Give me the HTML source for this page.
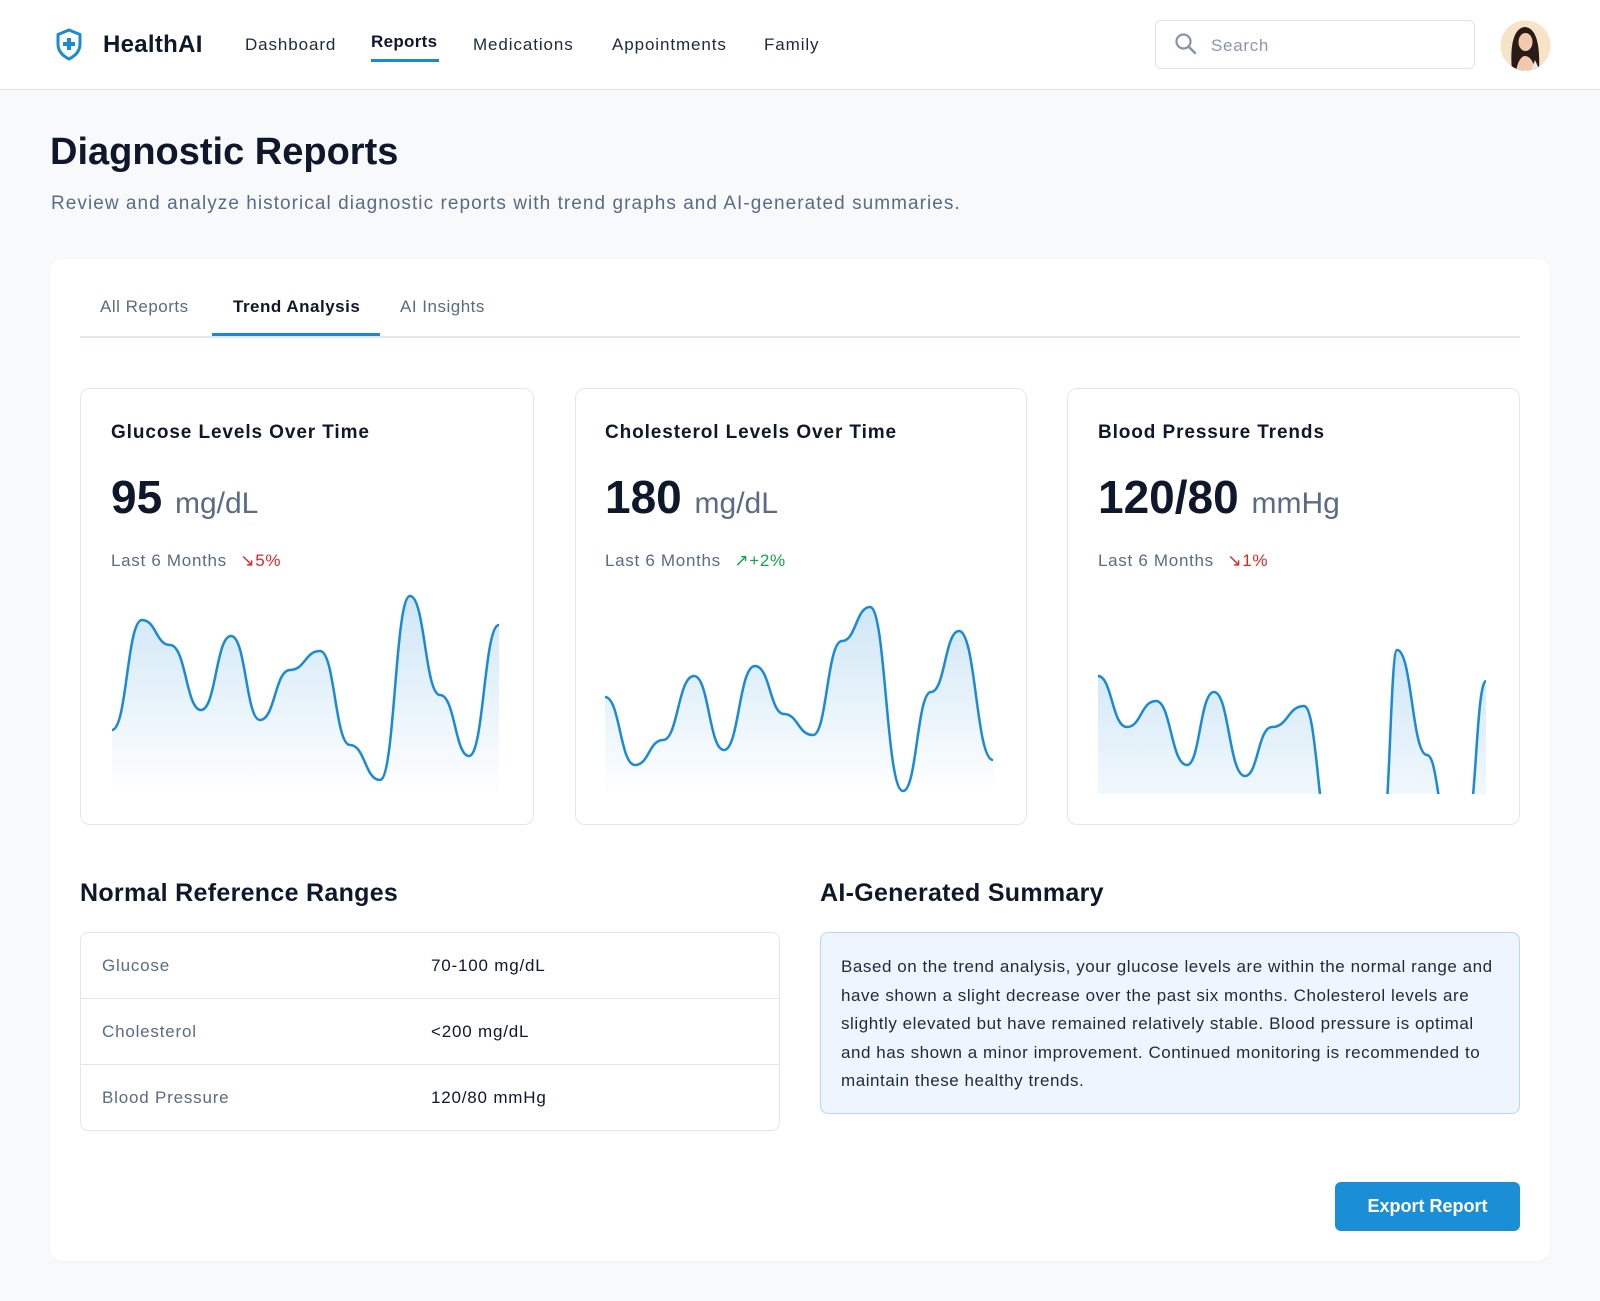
<!DOCTYPE html>
<html><head><meta charset="utf-8"><style>
*{margin:0;padding:0;box-sizing:border-box}
body{width:1600px;height:1301px;background:#f8f9fb;font-family:"Liberation Sans",sans-serif;color:#0f172a;position:relative;overflow:hidden}
.a{position:absolute;white-space:nowrap}
header{position:absolute;left:0;top:0;width:1600px;height:90px;background:#fff;border-bottom:1px solid #e2e6ec}
.nav{font-size:17px;color:#1e293b;top:35px;letter-spacing:0.9px}
.panel{position:absolute;left:50px;top:259px;width:1500px;height:1002px;background:#fff;border-radius:12px;box-shadow:0 1px 3px rgba(0,0,0,.04)}
.card{position:absolute;top:388px;height:437px;border:1.5px solid #e3e7ec;border-radius:10px;background:#fff}
.ct{font-size:19px;font-weight:bold;color:#0f172a;letter-spacing:0.9px}
.cv{font-size:46px;font-weight:bold;color:#0f172a}
.cv span{font-size:30px;font-weight:normal;color:#5a6b85}
.cl{font-size:17px;color:#5a6b85;letter-spacing:0.7px}
.h2{font-size:25px;font-weight:bold;top:879px;letter-spacing:0.3px}
.tbl{position:absolute;left:80px;top:932px;width:700px;height:199px;border:1.5px solid #e3e7ec;border-radius:8px}
.row{position:absolute;left:0;width:100%;height:66px;border-bottom:1.5px solid #e3e7ec;font-size:17px;letter-spacing:0.8px}
.row .l{position:absolute;left:21px;top:23px;color:#5a6b85}
.row .v{position:absolute;left:350px;top:23px;color:#0f172a}
.tab{font-size:17px;top:297px;letter-spacing:0.5px}
</style></head><body>
<header></header>
<svg class="a" style="left:55px;top:28px" width="28" height="33" viewBox="0 0 28 33"><path d="M14 2 L25 6.5 V16 C25 23 20 28 14 31 C8 28 3 23 3 16 V6.5 Z" fill="none" stroke="#1a8ad4" stroke-width="3" stroke-linejoin="round"/><path d="M14 10 V22 M8 16 H20" stroke="#1a8ad4" stroke-width="4"/></svg>
<div class="a" style="left:103px;top:31px;font-size:24px;font-weight:bold;color:#0f172a;letter-spacing:0.3px">HealthAI</div>
<div class="a nav" style="left:245px">Dashboard</div>
<div class="a nav" style="left:371px;top:32px;font-weight:bold;color:#0f172a;letter-spacing:0.3px">Reports</div>
<div class="a" style="left:371px;top:59px;width:68px;height:3px;background:#1a8ad4"></div>
<div class="a nav" style="left:473px">Medications</div>
<div class="a nav" style="left:612px">Appointments</div>
<div class="a nav" style="left:764px">Family</div>
<div class="a" style="left:1155px;top:20px;width:320px;height:49px;border:1.5px solid #dfe3e9;border-radius:6px;background:#fff"></div>
<svg class="a" style="left:1174px;top:32px" width="24" height="24" viewBox="0 0 24 24"><circle cx="9.5" cy="9.5" r="7" fill="none" stroke="#8894a8" stroke-width="2.2"/><path d="M14.5 14.5 L21 21" stroke="#8894a8" stroke-width="2.6" stroke-linecap="round"/></svg>
<div class="a" style="left:1211px;top:36px;font-size:17px;color:#8b97aa;letter-spacing:0.7px">Search</div>
<svg class="a" style="left:1500px;top:20px" width="51" height="51" viewBox="0 0 51 51"><defs><clipPath id="av"><circle cx="25.5" cy="25.5" r="25"/></clipPath></defs><circle cx="25.5" cy="25.5" r="25" fill="#f6e3c8"/><g clip-path="url(#av)"><path d="M12 51 C10 30 12 8 25 7 C38 8 40 30 39 51 Z" fill="#2b1b16"/><ellipse cx="25.5" cy="22" rx="7" ry="9" fill="#f1c9ad"/><path d="M16 51 C18 40 22 36 25 36 C30 36 34 42 35 51 Z" fill="#f1c9ad"/><path d="M31 51 L35 40 L40 51 Z" fill="#e8e8e8"/></g></svg>
<div class="a" style="left:50px;top:131px;font-size:38px;font-weight:bold;color:#0f172a">Diagnostic Reports</div>
<div class="a" style="left:51px;top:193px;font-size:19px;color:#5a6b85;letter-spacing:1.05px">Review and analyze historical diagnostic reports with trend graphs and AI-generated summaries.</div>
<div class="panel"></div>
<div class="a" style="left:80px;top:336px;width:1440px;height:1.5px;background:#e3e7ec"></div>
<div class="a tab" style="left:100px;color:#5a6b85">All Reports</div>
<div class="a tab" style="left:233px;font-weight:bold;color:#0f172a">Trend Analysis</div>
<div class="a tab" style="left:400px;color:#5a6b85">AI Insights</div>
<div class="a" style="left:212px;top:333px;width:168px;height:3px;background:#1a8ad4"></div>

<div class="card" style="left:80px;width:454px"></div>
<div class="card" style="left:575px;width:452px"></div>
<div class="card" style="left:1067px;width:453px"></div>

<div class="a ct" style="left:111px;top:422px">Glucose Levels Over Time</div>
<div class="a cv" style="left:111px;top:470px">95 <span>mg/dL</span></div>
<div class="a cl" style="left:111px;top:551px">Last 6 Months <span style="color:#dc2626;margin-left:8px">↘5%</span></div>

<div class="a ct" style="left:605px;top:422px">Cholesterol Levels Over Time</div>
<div class="a cv" style="left:605px;top:470px">180 <span>mg/dL</span></div>
<div class="a cl" style="left:605px;top:551px">Last 6 Months <span style="color:#16a34a;margin-left:8px">↗+2%</span></div>

<div class="a ct" style="left:1098px;top:422px">Blood Pressure Trends</div>
<div class="a cv" style="left:1098px;top:470px">120/80 <span>mmHg</span></div>
<div class="a cl" style="left:1098px;top:551px">Last 6 Months <span style="color:#dc2626;margin-left:8px">↘1%</span></div>

<svg class="a" style="left:0;top:0" width="1600" height="1301" viewBox="0 0 1600 1301">
<defs><linearGradient id="g" x1="0" y1="0" x2="0" y2="1"><stop offset="0" stop-color="#cfe6f6"/><stop offset="1" stop-color="#ffffff"/></linearGradient>
<clipPath id="c3"><rect x="1098" y="600" width="390" height="194"/></clipPath></defs>
<path d="M112 730 C127 730 127 620 142 620 C156 620 156 645 170 645 C186 645 186 710 201 710 C216 710 216 636 231 636 C246 636 246 720 260 720 C275 720 275 670 290 670 C305 670 305 651 320 651 C335 651 335 745 350 745 C365 745 365 780 380 780 C395 780 395 596 410 596 C425 596 425 695 440 695 C455 695 455 756 469 756 C484 756 484 625 499 625 L499 796 L112 796 Z" fill="url(#g)"/>
<path d="M112 730 C127 730 127 620 142 620 C156 620 156 645 170 645 C186 645 186 710 201 710 C216 710 216 636 231 636 C246 636 246 720 260 720 C275 720 275 670 290 670 C305 670 305 651 320 651 C335 651 335 745 350 745 C365 745 365 780 380 780 C395 780 395 596 410 596 C425 596 425 695 440 695 C455 695 455 756 469 756 C484 756 484 625 499 625" fill="none" stroke="#1a8ad4" stroke-width="2.5"/>
<path d="M605 697 C620 697 620 765 635 765 C649 765 649 740 663 740 C678 740 678 676 694 676 C709 676 709 750 724 750 C739 750 739 666 755 666 C770 666 770 714 784 714 C798 714 798 735 813 735 C827 735 827 641 842 641 C856 641 856 607 870 607 C886 607 886 791 903 791 C917 791 917 692 931 692 C945 692 945 631 959 631 C976 631 976 760 993 760 L993 796 L605 796 Z" fill="url(#g)"/>
<path d="M605 697 C620 697 620 765 635 765 C649 765 649 740 663 740 C678 740 678 676 694 676 C709 676 709 750 724 750 C739 750 739 666 755 666 C770 666 770 714 784 714 C798 714 798 735 813 735 C827 735 827 641 842 641 C856 641 856 607 870 607 C886 607 886 791 903 791 C917 791 917 692 931 692 C945 692 945 631 959 631 C976 631 976 760 993 760" fill="none" stroke="#1a8ad4" stroke-width="2.5"/>
<g clip-path="url(#c3)">
<path d="M1098 676 C1112 676 1112 727 1127 727 C1141 727 1141 701 1156 701 C1171 701 1171 765 1187 765 C1200 765 1200 692 1214 692 C1229 692 1229 776 1245 776 C1258 776 1258 727 1272 727 C1288 727 1288 706 1304 706 C1318 706 1318 850 1334 850 L1380 850 C1390 850 1390 650 1397 650 C1412 650 1412 755 1427 755 C1438 755 1438 830 1450 830 L1466 830 C1476 830 1476 681 1486 681 L1486 796 L1098 796 Z" fill="url(#g)"/>
<path d="M1098 676 C1112 676 1112 727 1127 727 C1141 727 1141 701 1156 701 C1171 701 1171 765 1187 765 C1200 765 1200 692 1214 692 C1229 692 1229 776 1245 776 C1258 776 1258 727 1272 727 C1288 727 1288 706 1304 706 C1318 706 1318 850 1334 850 L1380 850 C1390 850 1390 650 1397 650 C1412 650 1412 755 1427 755 C1438 755 1438 830 1450 830 L1466 830 C1476 830 1476 681 1486 681" fill="none" stroke="#1a8ad4" stroke-width="2.5"/>
</g>
</svg>

<div class="a h2" style="left:80px">Normal Reference Ranges</div>
<div class="a h2" style="left:820px">AI-Generated Summary</div>
<div class="tbl">
<div class="row" style="top:0"><span class="l">Glucose</span><span class="v">70-100 mg/dL</span></div>
<div class="row" style="top:66px"><span class="l">Cholesterol</span><span class="v">&lt;200 mg/dL</span></div>
<div class="row" style="top:132px;border-bottom:none"><span class="l">Blood Pressure</span><span class="v">120/80 mmHg</span></div>
</div>
<div class="a" style="left:820px;top:932px;width:700px;height:182px;background:#eef5fe;border:1.5px solid #b9d6f5;border-radius:8px;padding:20px 20px;white-space:normal;font-size:17px;line-height:28.5px;color:#1e293b;letter-spacing:0.55px">Based on the trend analysis, your glucose levels are within the normal range and have shown a slight decrease over the past six months. Cholesterol levels are slightly elevated but have remained relatively stable. Blood pressure is optimal and has shown a minor improvement. Continued monitoring is recommended to maintain these healthy trends.</div>
<div class="a" style="left:1335px;top:1182px;width:185px;height:49px;background:#1a8fd6;border-radius:6px;color:#fff;font-size:18px;font-weight:bold;text-align:center;line-height:49px">Export Report</div>
</body></html>
